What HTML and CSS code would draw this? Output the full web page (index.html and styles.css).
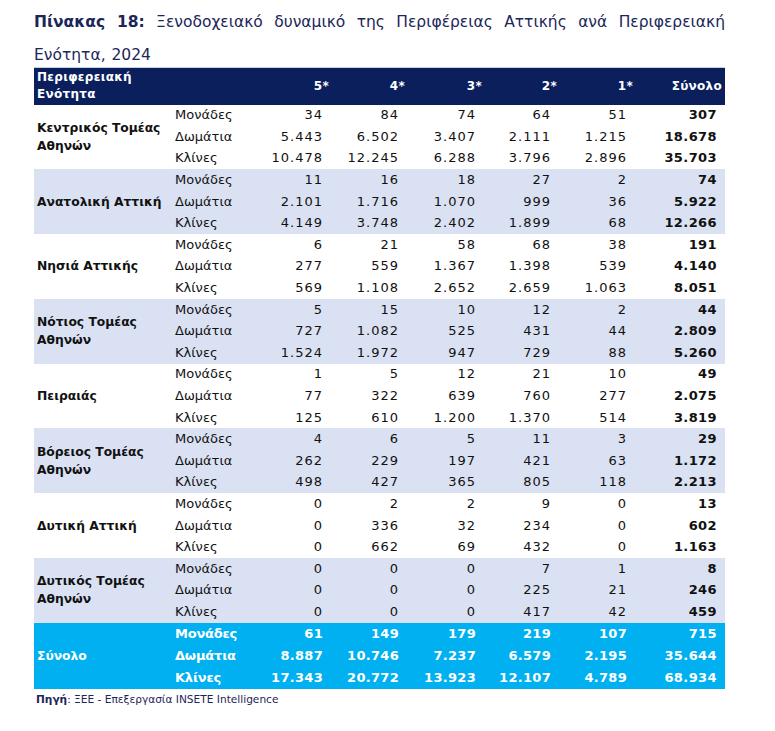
FILE: index.html
```html
<!DOCTYPE html>
<html lang="el">
<head>
<meta charset="utf-8">
<link rel="stylesheet" href="styles.css">
</head>
<body>
<div class="page">
  <p class="title"><b class="title-lead">Πίνακας 18:</b> <span class="title-text">Ξενοδοχειακό δυναμικό της Περιφέρειας Αττικής ανά Περιφερειακή</span> <span class="title-text">Ενότητα, 2024</span></p>
  <table class="tbl">
    <colgroup>
      <col class="c-region"><col class="c-type"><col class="c-n5"><col class="c-n4"><col class="c-n3"><col class="c-n2"><col class="c-n1"><col class="c-tot">
    </colgroup>
    <thead>
      <tr>
        <th class="h-region">Περιφερειακή<br>Ενότητα</th>
        <th></th>
        <th>5*</th><th>4*</th><th>3*</th><th>2*</th><th>1*</th><th>Σύνολο</th>
      </tr>
    </thead>
    <tbody class="g">
      <tr><td class="region" rowspan="3">Κεντρικός Τομέας<br>Αθηνών</td><td class="type">Μονάδες</td><td>34</td><td>84</td><td>74</td><td>64</td><td>51</td><td class="tot">307</td></tr>
      <tr><td class="type">Δωμάτια</td><td>5.443</td><td>6.502</td><td>3.407</td><td>2.111</td><td>1.215</td><td class="tot">18.678</td></tr>
      <tr><td class="type">Κλίνες</td><td>10.478</td><td>12.245</td><td>6.288</td><td>3.796</td><td>2.896</td><td class="tot">35.703</td></tr>
    </tbody>
    <tbody class="g band">
      <tr><td class="region" rowspan="3">Ανατολική Αττική</td><td class="type">Μονάδες</td><td>11</td><td>16</td><td>18</td><td>27</td><td>2</td><td class="tot">74</td></tr>
      <tr><td class="type">Δωμάτια</td><td>2.101</td><td>1.716</td><td>1.070</td><td>999</td><td>36</td><td class="tot">5.922</td></tr>
      <tr><td class="type">Κλίνες</td><td>4.149</td><td>3.748</td><td>2.402</td><td>1.899</td><td>68</td><td class="tot">12.266</td></tr>
    </tbody>
    <tbody class="g">
      <tr><td class="region" rowspan="3">Νησιά Αττικής</td><td class="type">Μονάδες</td><td>6</td><td>21</td><td>58</td><td>68</td><td>38</td><td class="tot">191</td></tr>
      <tr><td class="type">Δωμάτια</td><td>277</td><td>559</td><td>1.367</td><td>1.398</td><td>539</td><td class="tot">4.140</td></tr>
      <tr><td class="type">Κλίνες</td><td>569</td><td>1.108</td><td>2.652</td><td>2.659</td><td>1.063</td><td class="tot">8.051</td></tr>
    </tbody>
    <tbody class="g band">
      <tr><td class="region" rowspan="3">Νότιος Τομέας<br>Αθηνών</td><td class="type">Μονάδες</td><td>5</td><td>15</td><td>10</td><td>12</td><td>2</td><td class="tot">44</td></tr>
      <tr><td class="type">Δωμάτια</td><td>727</td><td>1.082</td><td>525</td><td>431</td><td>44</td><td class="tot">2.809</td></tr>
      <tr><td class="type">Κλίνες</td><td>1.524</td><td>1.972</td><td>947</td><td>729</td><td>88</td><td class="tot">5.260</td></tr>
    </tbody>
    <tbody class="g">
      <tr><td class="region" rowspan="3">Πειραιάς</td><td class="type">Μονάδες</td><td>1</td><td>5</td><td>12</td><td>21</td><td>10</td><td class="tot">49</td></tr>
      <tr><td class="type">Δωμάτια</td><td>77</td><td>322</td><td>639</td><td>760</td><td>277</td><td class="tot">2.075</td></tr>
      <tr><td class="type">Κλίνες</td><td>125</td><td>610</td><td>1.200</td><td>1.370</td><td>514</td><td class="tot">3.819</td></tr>
    </tbody>
    <tbody class="g band">
      <tr><td class="region" rowspan="3">Βόρειος Τομέας<br>Αθηνών</td><td class="type">Μονάδες</td><td>4</td><td>6</td><td>5</td><td>11</td><td>3</td><td class="tot">29</td></tr>
      <tr><td class="type">Δωμάτια</td><td>262</td><td>229</td><td>197</td><td>421</td><td>63</td><td class="tot">1.172</td></tr>
      <tr><td class="type">Κλίνες</td><td>498</td><td>427</td><td>365</td><td>805</td><td>118</td><td class="tot">2.213</td></tr>
    </tbody>
    <tbody class="g">
      <tr><td class="region" rowspan="3">Δυτική Αττική</td><td class="type">Μονάδες</td><td>0</td><td>2</td><td>2</td><td>9</td><td>0</td><td class="tot">13</td></tr>
      <tr><td class="type">Δωμάτια</td><td>0</td><td>336</td><td>32</td><td>234</td><td>0</td><td class="tot">602</td></tr>
      <tr><td class="type">Κλίνες</td><td>0</td><td>662</td><td>69</td><td>432</td><td>0</td><td class="tot">1.163</td></tr>
    </tbody>
    <tbody class="g band">
      <tr><td class="region" rowspan="3">Δυτικός Τομέας<br>Αθηνών</td><td class="type">Μονάδες</td><td>0</td><td>0</td><td>0</td><td>7</td><td>1</td><td class="tot">8</td></tr>
      <tr><td class="type">Δωμάτια</td><td>0</td><td>0</td><td>0</td><td>225</td><td>21</td><td class="tot">246</td></tr>
      <tr><td class="type">Κλίνες</td><td>0</td><td>0</td><td>0</td><td>417</td><td>42</td><td class="tot">459</td></tr>
    </tbody>
    <tbody class="g total">
      <tr><td class="region" rowspan="3">Σύνολο</td><td class="type">Μονάδες</td><td>61</td><td>149</td><td>179</td><td>219</td><td>107</td><td class="tot">715</td></tr>
      <tr><td class="type">Δωμάτια</td><td>8.887</td><td>10.746</td><td>7.237</td><td>6.579</td><td>2.195</td><td class="tot">35.644</td></tr>
      <tr><td class="type">Κλίνες</td><td>17.343</td><td>20.772</td><td>13.923</td><td>12.107</td><td>4.789</td><td class="tot">68.934</td></tr>
    </tbody>
  </table>
  <p class="source"><b>Πηγή</b>: ΞΕΕ - Επεξεργασία INSETE Intelligence</p>
</div>
</body>
</html>
```

FILE: styles.css
```css
* { box-sizing: border-box; }
html, body { margin: 0; padding: 0; background: #fff; }
body { font-family: "DejaVu Sans", Verdana, sans-serif; }
.page { padding: 6px 0 0 34px; width: 725px; }
.title {
  margin: 0;
  width: 691px;
  font-size: 15.5px;
  line-height: 33px;
  color: #1c2659;
  text-align: justify;
  text-align-last: left;
  word-spacing: 1px;
}
.title-lead { font-weight: bold; }
.tbl {
  width: 691px;
  border-collapse: collapse;
  table-layout: fixed;
  font-size: 13px;
  color: #111;
  margin-top: -5px;
}
.c-region { width: 138px; }
.c-type { width: 83px; }
.c-n5 { width: 77px; }
.c-n4 { width: 76px; }
.c-n3 { width: 77px; }
.c-n2 { width: 75px; }
.c-n1 { width: 76px; }
.c-tot { width: 89px; }
.tbl thead tr { height: 37px; background: #0a1f5c; border-top: 1px solid #c8cde0; }
.tbl th {
  color: #fff;
  font-weight: bold;
  font-size: 12px;
  letter-spacing: 0.3px;
  text-align: right;
  padding: 0 3px 0 0;
  line-height: 17px;
  vertical-align: middle;
}
.tbl th.h-region { text-align: left; padding-left: 3px; }
.tbl td {
  height: 21.6px;
  padding: 0 9px 0 0;
  text-align: right;
  vertical-align: middle;
  white-space: nowrap;
  line-height: 16px;
  letter-spacing: 1px;
}
.tbl td.type { text-align: left; padding-left: 3px; letter-spacing: 0; }
.tbl td.region {
  text-align: left;
  padding: 0 0 0 3px;
  font-weight: bold;
  font-size: 12.3px;
  line-height: 18px;
  letter-spacing: 0;
  white-space: nowrap;
}
.tbl td.tot { font-weight: bold; padding-right: 8px; letter-spacing: 0.4px; }
.band { background: #dae1f3; }
.total { background: #00b0f0; }
.total td { color: #fff; font-weight: bold; height: 22px; letter-spacing: 0.3px; }
.total td.type { letter-spacing: -0.2px; }
.source {
  margin: 4px 0 0 2px;
  font-size: 10.6px;
  color: #1c2659;
}
.source b { font-weight: bold; }
```
